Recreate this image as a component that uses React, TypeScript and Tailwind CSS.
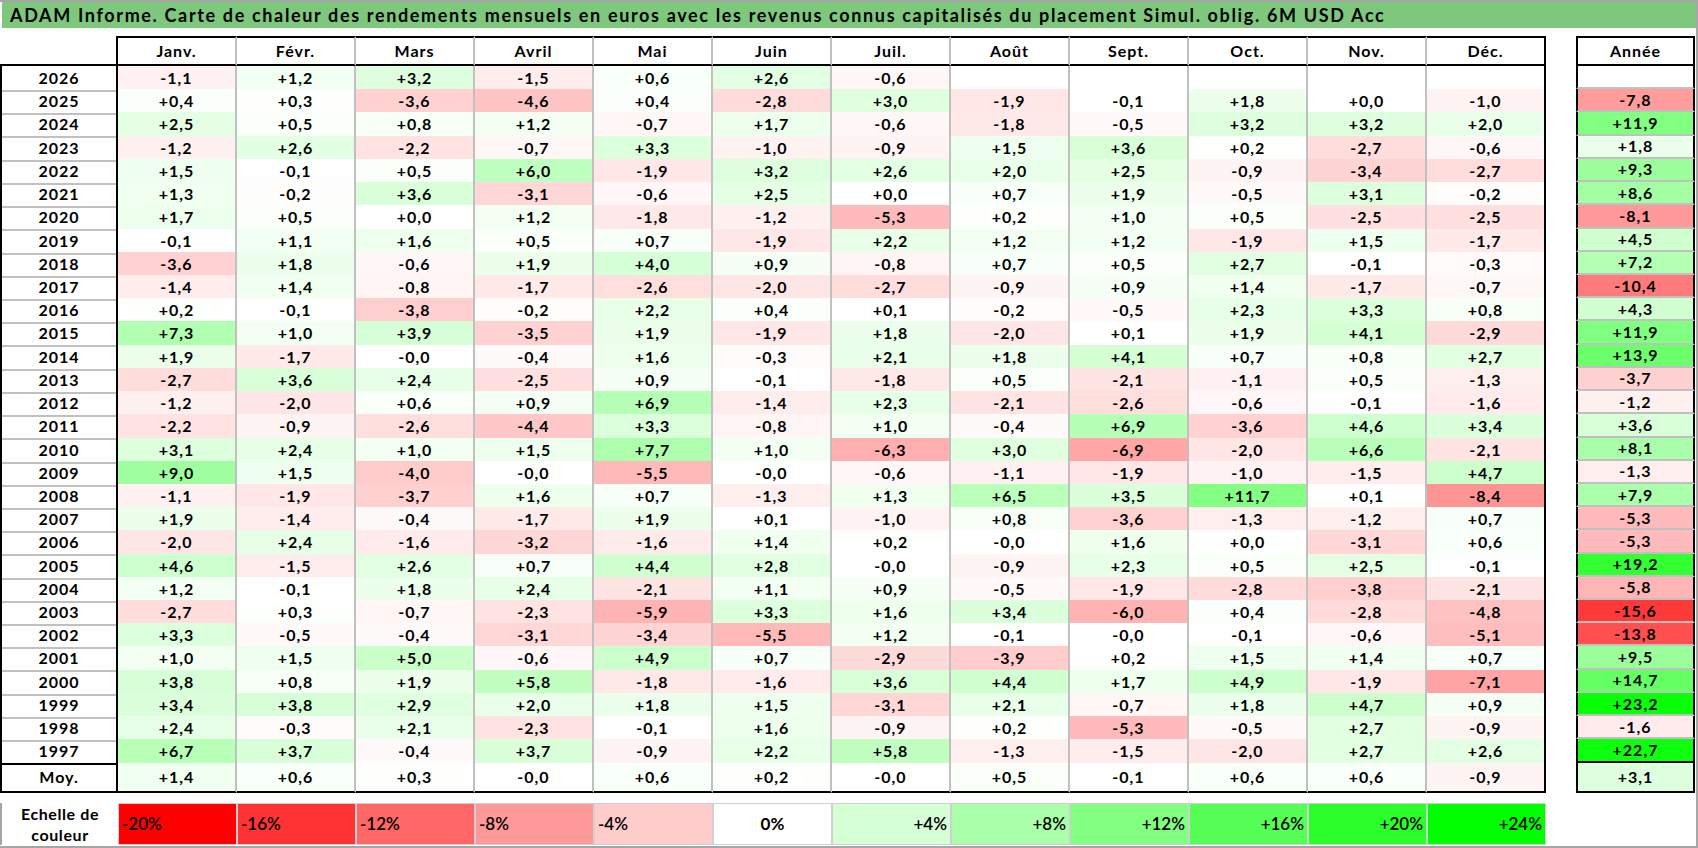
import * as React from 'react';

const MONTHS = ['Janv.', 'Févr.', 'Mars', 'Avril', 'Mai', 'Juin', 'Juil.', 'Août', 'Sept.', 'Oct.', 'Nov.', 'Déc.'];

// year, 12 monthly returns, yearly return
const ROWS: [string, string, string][] = [
  ['2026', '-1,1 +1,2 +3,2 -1,5 +0,6 +2,6 -0,6 _ _ _ _ _', ''],
  ['2025', '+0,4 +0,3 -3,6 -4,6 +0,4 -2,8 +3,0 -1,9 -0,1 +1,8 +0,0 -1,0', '-7,8'],
  ['2024', '+2,5 +0,5 +0,8 +1,2 -0,7 +1,7 -0,6 -1,8 -0,5 +3,2 +3,2 +2,0', '+11,9'],
  ['2023', '-1,2 +2,6 -2,2 -0,7 +3,3 -1,0 -0,9 +1,5 +3,6 +0,2 -2,7 -0,6', '+1,8'],
  ['2022', '+1,5 -0,1 +0,5 +6,0 -1,9 +3,2 +2,6 +2,0 +2,5 -0,9 -3,4 -2,7', '+9,3'],
  ['2021', '+1,3 -0,2 +3,6 -3,1 -0,6 +2,5 +0,0 +0,7 +1,9 -0,5 +3,1 -0,2', '+8,6'],
  ['2020', '+1,7 +0,5 +0,0 +1,2 -1,8 -1,2 -5,3 +0,2 +1,0 +0,5 -2,5 -2,5', '-8,1'],
  ['2019', '-0,1 +1,1 +1,6 +0,5 +0,7 -1,9 +2,2 +1,2 +1,2 -1,9 +1,5 -1,7', '+4,5'],
  ['2018', '-3,6 +1,8 -0,6 +1,9 +4,0 +0,9 -0,8 +0,7 +0,5 +2,7 -0,1 -0,3', '+7,2'],
  ['2017', '-1,4 +1,4 -0,8 -1,7 -2,6 -2,0 -2,7 -0,9 +0,9 +1,4 -1,7 -0,7', '-10,4'],
  ['2016', '+0,2 -0,1 -3,8 -0,2 +2,2 +0,4 +0,1 -0,2 -0,5 +2,3 +3,3 +0,8', '+4,3'],
  ['2015', '+7,3 +1,0 +3,9 -3,5 +1,9 -1,9 +1,8 -2,0 +0,1 +1,9 +4,1 -2,9', '+11,9'],
  ['2014', '+1,9 -1,7 -0,0 -0,4 +1,6 -0,3 +2,1 +1,8 +4,1 +0,7 +0,8 +2,7', '+13,9'],
  ['2013', '-2,7 +3,6 +2,4 -2,5 +0,9 -0,1 -1,8 +0,5 -2,1 -1,1 +0,5 -1,3', '-3,7'],
  ['2012', '-1,2 -2,0 +0,6 +0,9 +6,9 -1,4 +2,3 -2,1 -2,6 -0,6 -0,1 -1,6', '-1,2'],
  ['2011', '-2,2 -0,9 -2,6 -4,4 +3,3 -0,8 +1,0 -0,4 +6,9 -3,6 +4,6 +3,4', '+3,6'],
  ['2010', '+3,1 +2,4 +1,0 +1,5 +7,7 +1,0 -6,3 +3,0 -6,9 -2,0 +6,6 -2,1', '+8,1'],
  ['2009', '+9,0 +1,5 -4,0 -0,0 -5,5 -0,0 -0,6 -1,1 -1,9 -1,0 -1,5 +4,7', '-1,3'],
  ['2008', '-1,1 -1,9 -3,7 +1,6 +0,7 -1,3 +1,3 +6,5 +3,5 +11,7 +0,1 -8,4', '+7,9'],
  ['2007', '+1,9 -1,4 -0,4 -1,7 +1,9 +0,1 -1,0 +0,8 -3,6 -1,3 -1,2 +0,7', '-5,3'],
  ['2006', '-2,0 +2,4 -1,6 -3,2 -1,6 +1,4 +0,2 -0,0 +1,6 +0,0 -3,1 +0,6', '-5,3'],
  ['2005', '+4,6 -1,5 +2,6 +0,7 +4,4 +2,8 -0,0 -0,9 +2,3 +0,5 +2,5 -0,1', '+19,2'],
  ['2004', '+1,2 -0,1 +1,8 +2,4 -2,1 +1,1 +0,9 -0,5 -1,9 -2,8 -3,8 -2,1', '-5,8'],
  ['2003', '-2,7 +0,3 -0,7 -2,3 -5,9 +3,3 +1,6 +3,4 -6,0 +0,4 -2,8 -4,8', '-15,6'],
  ['2002', '+3,3 -0,5 -0,4 -3,1 -3,4 -5,5 +1,2 -0,1 -0,0 -0,1 -0,6 -5,1', '-13,8'],
  ['2001', '+1,0 +1,5 +5,0 -0,6 +4,9 +0,7 -2,9 -3,9 +0,2 +1,5 +1,4 +0,7', '+9,5'],
  ['2000', '+3,8 +0,8 +1,9 +5,8 -1,8 -1,6 +3,6 +4,4 +1,7 +4,9 -1,9 -7,1', '+14,7'],
  ['1999', '+3,4 +3,8 +2,9 +2,0 +1,8 +1,5 -3,1 +2,1 -0,7 +1,8 +4,7 +0,9', '+23,2'],
  ['1998', '+2,4 -0,3 +2,1 -2,3 -0,1 +1,6 -0,9 +0,2 -5,3 -0,5 +2,7 -0,9', '-1,6'],
  ['1997', '+6,7 +3,7 -0,4 +3,7 -0,9 +2,2 +5,8 -1,3 -1,5 -2,0 +2,7 +2,6', '+22,7'],
];

const AVERAGE = '+1,4 +0,6 +0,3 -0,0 +0,6 +0,2 -0,0 +0,5 -0,1 +0,6 +0,6 -0,9'.split(' ');

const SCALE = [-20, -16, -12, -8, -4, 0, 4, 8, 12, 16, 20, 24];

function heat(value: number) {
  if (value < 0) {
    const c = Math.round(255 * (1 - Math.min(-value, 20) / 20));
    return `rgb(255, ${c}, ${c})`;
  }
  const c = Math.round(255 * (1 - Math.min(value, 24) / 24));
  return `rgb(${c}, 255, ${c})`;
}

function cellColor(text: string) {
  if (!text) return '#ffffff';
  return heat(parseFloat(text.replace(',', '.')));
}

function MonthCells({ values, last }: { values: string[]; last?: boolean }) {
  return (
    <>
      {values.map((v, i) => (
        <div
          key={i}
          style={{ backgroundColor: cellColor(v) }}
          className={`flex items-center justify-center border-r-2 border-b-2 ${
            i === 11 ? 'border-r-black' : 'border-r-[#c0c0c0]'
          } ${last ? 'border-b-black' : 'border-b-[#c0c0c0]'}`}
        >
          {v}
        </div>
      ))}
    </>
  );
}

export default function App() {
  return (
    <div className="box-border h-[848px] w-[1698px] overflow-hidden border-2 border-l-0 border-[#a6a6a6] bg-white font-[Lato,sans-serif] text-black">
      <div className="ml-[2px] flex h-[26px] items-center bg-[#7ec87e] pl-2 text-[18px] font-bold tracking-[1.65px]">
        ADAM Informe. Carte de chaleur des rendements mensuels en euros avec les revenus connus capitalisés du placement Simul. oblig. 6M USD Acc
      </div>

      <div className="mt-[8px] flex text-[16px] font-bold tracking-[1px]">
        <div className="w-[1548px]">
          <div className="grid h-[30px] grid-cols-[118px_repeat(12,119px)]">
            <div className="border-r-2 border-b-2 border-black" />
            {MONTHS.map((m, i) => (
              <div
                key={m}
                className={`flex items-center justify-center border-t-2 border-b-2 border-r-2 border-t-black border-b-black ${
                  i === 11 ? 'border-r-black' : 'border-r-[#c0c0c0]'
                }`}
              >
                {m}
              </div>
            ))}
          </div>

          {ROWS.map(([year, months], r) => (
            <div key={year} className="grid h-[23.23px] grid-cols-[118px_repeat(12,119px)]">
              <div
                className={`flex items-center justify-center border-x-2 border-b-2 border-x-black ${
                  r === ROWS.length - 1 ? 'border-b-black' : 'border-b-[#c0c0c0]'
                }`}
              >
                {year}
              </div>
              <MonthCells values={months.split(' ').map((v) => (v === '_' ? '' : v))} last={r === ROWS.length - 1} />
            </div>
          ))}

          <div className="grid h-[30px] grid-cols-[118px_repeat(12,119px)]">
            <div className="flex items-center justify-center border-x-2 border-b-2 border-black">Moy.</div>
            <MonthCells values={AVERAGE} last />
          </div>
        </div>

        <div className="ml-[28px] w-[119px]">
          <div className="flex h-[30px] items-center justify-center border-2 border-black">Année</div>
          {ROWS.map(([year, , total], r) => (
            <div
              key={year}
              style={{ backgroundColor: cellColor(total) }}
              className={`flex h-[23.23px] items-center justify-center border-x-2 border-b-2 border-x-black ${
                r === ROWS.length - 1 ? 'border-b-black' : 'border-b-[#c0c0c0]'
              }`}
            >
              {total}
            </div>
          ))}
          <div
            style={{ backgroundColor: cellColor('+3,1') }}
            className="flex h-[30px] items-center justify-center border-x-2 border-b-2 border-black"
          >
            +3,1
          </div>
        </div>
      </div>

      <div className="mt-[10px] flex h-[42px]">
        <div className="flex w-[118px] flex-col items-center justify-center border-l-2 border-[#a6a6a6] text-[16px] leading-[21px] font-bold tracking-[0.6px]">
          <span>Echelle de</span>
          <span>couleur</span>
        </div>
        {SCALE.map((s) => (
          <div
            key={s}
            style={{ backgroundColor: heat(s) }}
            className={`flex w-[119px] items-center border border-[#d0d0d0] px-[3px] text-[17px] ${
              s < 0 ? 'justify-start font-semibold' : s === 0 ? 'justify-center font-bold' : 'justify-end font-semibold'
            }`}
          >
            {s > 0 ? `+${s}%` : `${s}%`}
          </div>
        ))}
      </div>
    </div>
  );
}
